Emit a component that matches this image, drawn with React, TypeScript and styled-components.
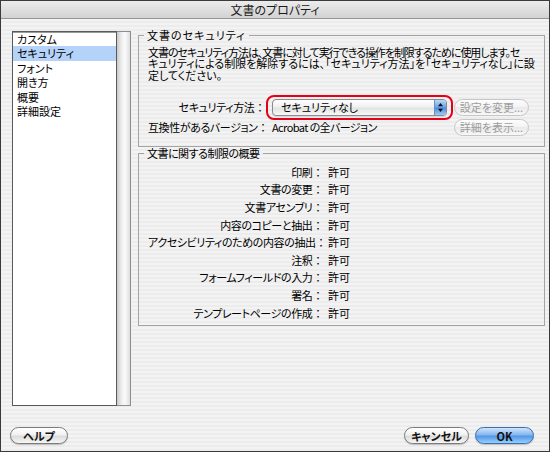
import styled, { createGlobalStyle, css } from "styled-components";

const GlobalStyle = createGlobalStyle`
  html, body {
    margin: 0;
    padding: 0;
  }
  body {
    width: 550px;
    height: 452px;
    overflow: hidden;
    background: #ececec;
    font-family: "Noto Sans CJK JP", "Liberation Sans", sans-serif;
    font-size: 11px;
    font-feature-settings: "palt";
    color: #000;
  }
  * {
    box-sizing: border-box;
  }
`;

const sidebarItems = ["カスタム", "セキュリティ", "フォント", "開き方", "概要", "詳細設定"];

const restrictions = [
	"印刷",
	"文書の変更",
	"文書アセンブリ",
	"内容のコピーと抽出",
	"アクセシビリティのための内容の抽出",
	"注釈",
	"フォームフィールドの入力",
	"署名",
	"テンプレートページの作成",
];

const App = () => {
	return (
		<>
			<GlobalStyle />
			<Window>
				<TitleBar>文書のプロパティ</TitleBar>
				<Main>
					<Sidebar>
						<List>
							{sidebarItems.map((item) => (
								<ListItem key={item} $selected={item === "セキュリティ"}>
									{item}
								</ListItem>
							))}
						</List>
						<Track />
					</Sidebar>

					<Content>
						<Group $pb={10}>
							<Legend $tracking={1}>文書のセキュリティ</Legend>
							<GroupBody>
								<Description>
									<DescLine $tracking={-1.05}>
										文書のセキュリティ方法は、文書に対して実行できる操作を制限するために使用します。セ
									</DescLine>
									<DescLine>キュリティによる制限を解除するには、「セキュリティ方法」を「セキュリティなし」に設</DescLine>
									<DescLine>定してください。</DescLine>
								</Description>
								<Controls>
									<Label>
										セキュリティ方法<Colon>：</Colon>
									</Label>
									<Popup>
										<PopupText>セキュリティなし</PopupText>
										<Stepper>
											<svg width="7" height="11" viewBox="0 0 7 11">
												<path d="M3.5 1 L6 4.2 L1 4.2 Z" fill="#111" />
												<path d="M3.5 10 L6 6.8 L1 6.8 Z" fill="#111" />
											</svg>
										</Stepper>
									</Popup>
									<SmallButton>設定を変更...</SmallButton>
									<Label>
										互換性があるバージョン<Colon>：</Colon>
									</Label>
									<Value $tracking={-0.6}>Acrobat の全バージョン</Value>
									<SmallButton>詳細を表示...</SmallButton>
								</Controls>
							</GroupBody>
						</Group>

						<Group $pb={4}>
							<Legend $tracking={-0.5}>文書に関する制限の概要</Legend>
							<GroupBody>
								<Summary>
									{restrictions.map((r) => (
										<SummaryRow key={r}>
											<Label>
												{r}
												<Colon>：</Colon>
											</Label>
											<Value>許可</Value>
										</SummaryRow>
									))}
								</Summary>
							</GroupBody>
						</Group>
					</Content>
				</Main>

				<Footer>
					<PushButton $width={58}>ヘルプ</PushButton>
					<Spacer />
					<PushButton $width={65}>キャンセル</PushButton>
					<PushButton $width={59} $primary>
						OK
					</PushButton>
				</Footer>
			</Window>
		</>
	);
};

const Window = styled.div`
	width: 550px;
	height: 452px;
	display: flex;
	flex-direction: column;
	border: 1px solid #3a3a3a;
	background: repeating-linear-gradient(to bottom, #ececec 0, #ececec 2px, #f3f3f3 2px, #f3f3f3 4px);
`;

const TitleBar = styled.div`
	flex: none;
	height: 18px;
	display: flex;
	align-items: center;
	justify-content: center;
	font-size: 12px;
	line-height: 1;
	color: #1a1a1a;
	background: linear-gradient(#ececec, #d2d2d2);
	border-bottom: 1px solid #959595;
`;

const Main = styled.div`
	display: flex;
	gap: 7px;
	padding: 10px 10px 0 11px;
`;

const Sidebar = styled.div`
	display: flex;
	flex: none;
	height: 375px;
	margin-top: 2px;
`;

const List = styled.ul`
	width: 105px;
	height: 100%;
	margin: 0;
	padding: 0;
	list-style: none;
	background: #fff;
	border: 1px solid #5a5a5a;
	box-shadow: inset 0 1px 0 #9a9a9a;
`;

const ListItem = styled.li<{ $selected?: boolean }>`
	height: 14.4px;
	line-height: 14.4px;
	padding-left: 4px;
	white-space: nowrap;
	background: ${(p) => (p.$selected ? "#b5d3f8" : "transparent")};
`;

const Track = styled.div`
	width: 14px;
	height: 100%;
	border: 1px solid #8e8e8e;
	border-left: none;
	background: linear-gradient(to right, #c9c9c9, #eeeeee 35%, #fbfbfb 60%, #dedede);
`;

const Content = styled.div`
	flex: 1;
	display: flex;
	flex-direction: column;
`;

const Group = styled.fieldset<{ $pb: number }>`
	margin: 0;
	padding: 0 0 ${(p) => p.$pb}px 0;
	min-width: 0;
	border: 1px solid #a4a4a4;
`;

const Legend = styled.legend<{ $tracking?: number }>`
	margin-left: 5px;
	padding: 0 3px;
	line-height: 13px;
	letter-spacing: ${(p) => p.$tracking ?? 0}px;
`;

const GroupBody = styled.div`
	padding: 0 9px;
`;

const Description = styled.div`
	padding-top: 4.5px;
`;

const DescLine = styled.div<{ $tracking?: number }>`
	height: 11.7px;
	line-height: 11.7px;
	white-space: nowrap;
	letter-spacing: ${(p) => p.$tracking ?? 0}px;
`;

const Controls = styled.div`
	display: grid;
	grid-template-columns: 117px 175px 75px;
	grid-auto-rows: 17px;
	column-gap: 7px;
	row-gap: 3px;
	align-items: center;
	margin-top: 17px;
`;

const Label = styled.span`
	text-align: right;
	white-space: nowrap;
	letter-spacing: -0.4px;
`;

const Colon = styled.span`
	font-feature-settings: normal;
`;

const Value = styled.span<{ $tracking?: number }>`
	white-space: nowrap;
	letter-spacing: ${(p) => p.$tracking ?? 0}px;
`;

const Popup = styled.div`
	position: relative;
	height: 17px;
	display: flex;
	align-items: center;
	padding-left: 8px;
	border: 1px solid #8b8b8b;
	border-radius: 4px;
	background: linear-gradient(#fefefe, #f1f1f1 45%, #e3e3e3 55%, #f7f7f7);
	box-shadow: 0 1px 1px rgba(0, 0, 0, 0.12);

	&::after {
		content: "";
		position: absolute;
		inset: -5px -7px -5px -7px;
		border: 2.5px solid #e2001a;
		border-radius: 8px;
	}
`;

const PopupText = styled.span`
	flex: 1;
	white-space: nowrap;
`;

const Stepper = styled.div`
	width: 12px;
	height: 100%;
	display: flex;
	align-items: center;
	justify-content: center;
	border-left: 1px solid #6b8fbf;
	border-radius: 0 3px 3px 0;
	background: linear-gradient(#bcd9f7, #6ea5e8 45%, #4d8fe0 55%, #9ccaf8);
`;

const SmallButton = styled.div`
	height: 17px;
	display: flex;
	align-items: center;
	justify-content: center;
	border: 1px solid #c6c6c6;
	border-radius: 9px;
	color: #9d9d9d;
	white-space: nowrap;
	background: linear-gradient(#fdfdfd, #f3f3f3 50%, #eaeaea 50%, #f8f8f8);
`;

const Summary = styled.div`
	display: grid;
	grid-template-columns: 175px 1fr;
	grid-auto-rows: 17.6px;
	column-gap: 5px;
	padding-top: 3.5px;
`;

const SummaryRow = styled.div`
	display: contents;

	& > span {
		align-self: center;
	}
`;

const Footer = styled.div`
	display: flex;
	align-items: center;
	gap: 6px;
	margin-top: auto;
	padding: 0 15px 7px 9px;
`;

const Spacer = styled.div`
	flex: 1;
`;

const PushButton = styled.button<{ $width: number; $primary?: boolean }>`
	width: ${(p) => p.$width}px;
	height: 17px;
	padding: 0;
	font-family: inherit;
	font-feature-settings: "palt";
	font-size: 11px;
	font-weight: bold;
	color: #111;
	border: 1px solid #7b7b7b;
	border-radius: 9px;
	background: linear-gradient(#ffffff, #f1f1f1 45%, #dcdcdc 55%, #f6f6f6);
	box-shadow: 0 1px 1px rgba(0, 0, 0, 0.22);

	${(p) =>
		p.$primary &&
		css`
			border-color: #3b6eb0;
			background: linear-gradient(#cfe5fb, #86b7ef 45%, #5497e6 55%, #97d0fd);
		`}
`;

export default App;
